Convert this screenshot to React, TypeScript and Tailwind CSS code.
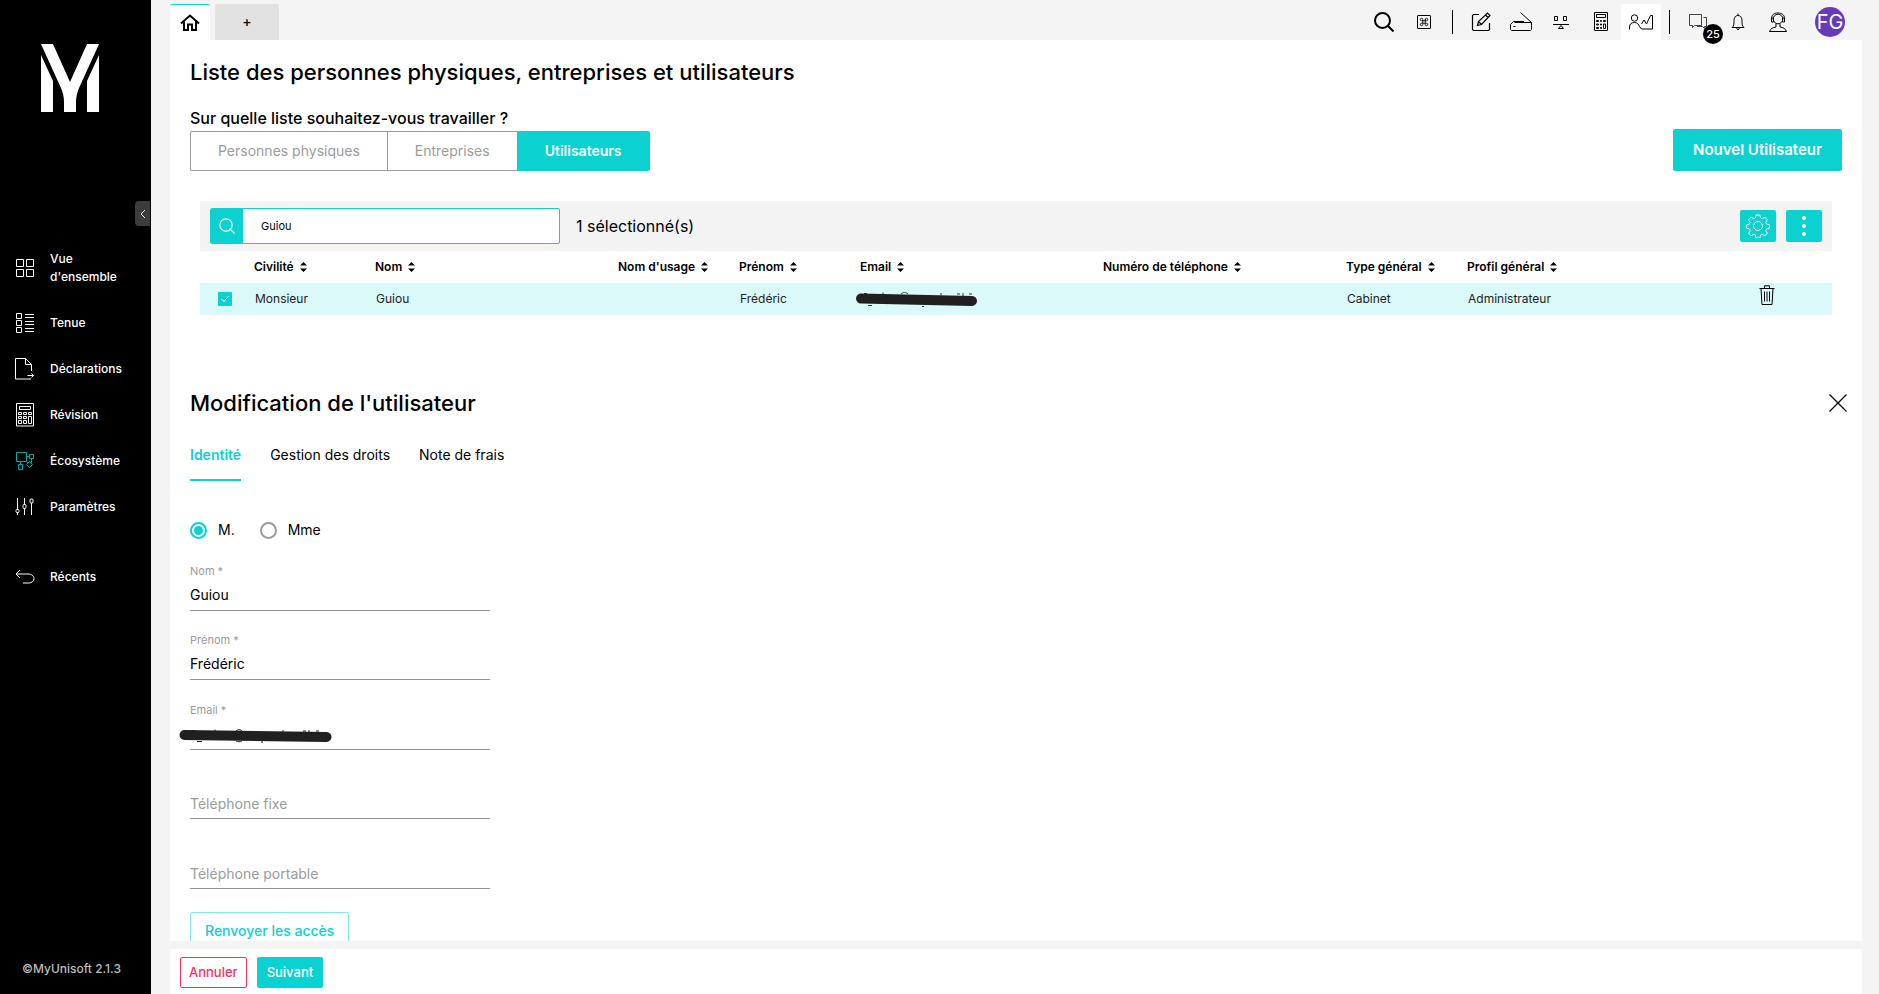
import React, { useState } from "react";
import { Command } from "lucide-react";

function Svg({
  w,
  h,
  children,
  className = "",
  sw = 1,
}: {
  w: number;
  h: number;
  children: React.ReactNode;
  className?: string;
  sw?: number;
}) {
  return (
    <svg
      width={w}
      height={h}
      viewBox={`0 0 ${w} ${h}`}
      fill="none"
      stroke="currentColor"
      strokeWidth={sw}
      className={`shrink-0 ${className}`}
      aria-hidden="true"
    >
      {children}
    </svg>
  );
}

/* ---------- sidebar icons ---------- */

const GridIcon = () => (
  <Svg w={20} h={20}>
    <path d="M1.500 1.500h7v7h-7zM11.500 1.500h7v7h-7zM1.500 11.500h7v7h-7zM11.500 11.500h7v7h-7z" />
  </Svg>
);
const ListIcon = () => (
  <Svg w={20} h={22}>
    <path d="M1.500 1.500h5v5h-5zM1.500 8.500h5v5h-5zM1.500 15.500h5v5h-5z" />
    <path d="M10 2.500h9M10 5.500h9M10 9.500h9M10 12.500h9M10 16.500h9M10 19.500h9" />
  </Svg>
);
const FileIcon = () => (
  <Svg w={20} h={24}>
    <path d="M16.500 14V7.500L10.500 1.500H.5v20.500h15.500" />
    <path d="M10.500 1.500v6h6" />
    <path d="M12.500 18.500h6M16.500 16.500l2 2-2 2" />
  </Svg>
);
const CalcIcon = () => (
  <Svg w={20} h={24}>
    <path d="M1.500 .5h17v22.500h-17z" />
    <path d="M4.500 3.500h11v3h-11z" />
    <path d="M3.500 9.500h3v2h-3zM8.500 9.500h3v2h-3zM13.500 9.500h3v2h-3zM3.500 13.500h3v2h-3zM8.500 13.500h3v2h-3zM3.500 17.500h3v3h-3zM8.500 17.500h3v3h-3zM13.500 13.500h3v7h-3z" />
  </Svg>
);
const EcoIcon = () => (
  <Svg w={20} h={20} className="text-[#0aa9a9]">
    <path d="M1.500 1.500h10v9h-10zM14.500 3.500h4v4h-4zM3.500 13.500h4v5h-4zM14.500 10.500l3 3-3 3-3-3z" />
    <path d="M11.500 5.500h3M5.500 10.500v3M11.500 10.500l1.500 1.500M16.500 7.500v4" />
  </Svg>
);
const SlidersIcon = () => (
  <Svg w={20} h={20}>
    <path d="M2.500 1v11.500M2.500 16v2M9.500 1v6.500M9.500 11.500V18M16.500 6v12" />
    <rect x="1" y="12.500" width="3" height="3" rx="1" />
    <rect x="8" y="7.500" width="3" height="4" rx="1" />
    <rect x="15" y="2" width="3" height="4" rx="1" />
  </Svg>
);
const BackIcon = () => (
  <Svg w={20} h={16}>
    <path d="M5 1L1 5l4 4M1 5h12c3.500 0 6 2 6 4.500S17 14 13.500 14H8" />
  </Svg>
);

const navItems: { label: string; icon: React.ReactNode }[] = [
  { label: "Vue d'ensemble", icon: <GridIcon /> },
  { label: "Tenue", icon: <ListIcon /> },
  { label: "Déclarations", icon: <FileIcon /> },
  { label: "Révision", icon: <CalcIcon /> },
  { label: "Écosystème", icon: <EcoIcon /> },
  { label: "Paramètres", icon: <SlidersIcon /> },
];

function NavLink({ label, icon }: { label: string; icon: React.ReactNode }) {
  return (
    <a
      href="#"
      className="flex items-center gap-[15px] py-3.5 pr-6 pl-[15px] text-xs leading-[18px] font-medium text-white"
    >
      <span className="flex h-[18px] w-5 items-center justify-center">{icon}</span>
      <span>{label}</span>
    </a>
  );
}

function Sidebar() {
  return (
    <aside className="relative flex w-[151px] shrink-0 flex-col bg-black">
      <a href="#" aria-label="MyUnisoft" className="mt-11 ml-[41px] block h-[68px]">
        <svg width="58" height="68" viewBox="0 0 58 68" fill="white" aria-hidden="true">
          <path d="M0 0H12L29 38L46 0H58L38 44C36 49 35 53 35 58V68H23V58C23 53 22 49 20 44Z" />
          <path d="M0 11L12 37V68H0ZM58 11L46 37V68H58Z" />
        </svg>
      </a>
      <button
        type="button"
        aria-label="Réduire le menu"
        className="absolute top-[201px] right-px flex h-[25px] w-[15px] items-center justify-center rounded-l bg-[#3c3c3c] text-white"
      >
        <Svg w={6} h={10}>
          <path d="M5 1L1 5l4 4" />
        </Svg>
      </button>
      <nav className="mt-[124px]">
        {navItems.map((item) => (
          <NavLink key={item.label} {...item} />
        ))}
        <div className="mt-6">
          <NavLink label="Récents" icon={<BackIcon />} />
        </div>
      </nav>
      <p className="mt-auto mb-4 ml-[22px] text-xs leading-[18px] font-medium text-[#bdbdbd]">
        ©MyUnisoft 2.1.3
      </p>
    </aside>
  );
}

/* ---------- top bar ---------- */

const tools: { label: string; icon: React.ReactNode }[] = [
  {
    label: "Édition",
    icon: (
      <Svg w={20} h={20} sw={1.2}>
        <path d="M8 2.500H2.500l-1 1v14l1 1h15l1-1V11" />
        <path d="M6.500 13.500l1-4 9-8.500 2.500 2.500-8.500 9zM7.500 9.500l3 3M14.500 3l2.500 2.500" />
      </Svg>
    ),
  },
  {
    label: "Scanner",
    icon: (
      <Svg w={22} h={20}>
        <path d="M10.500 .5L21.500 10.500M14 9.500H3.500l-3 3v5l1 1h19l1-1v-7h-17" />
        <path d="M3.500 14.500h2" />
      </Svg>
    ),
  },
  {
    label: "Équilibre",
    icon: (
      <Svg w={16} h={15}>
        <path d="M1.500 1.500h3v4h-3zM10.500 1.500h3v4h-3zM0 9.500h16M8 10.500l2.500 3h-5z" />
      </Svg>
    ),
  },
  {
    label: "Calculatrice",
    icon: (
      <Svg w={14} h={20}>
        <path d="M.5 .5h13v18h-13z" />
        <path d="M2.500 2.500h9v3h-9zM2.500 8.500h2v1h-2zM6.500 8.500h1v1h-1zM9.500 8.500h2v1h-2zM2.500 12h2v1h-2zM6.500 12h1v1h-1zM2.500 15.500h2v1h-2zM6.500 15.500h1v1h-1zM9.500 12h2v4.500h-2z" />
      </Svg>
    ),
  },
];

const toolButton = "flex h-9 w-10 items-center justify-center";

function TopBar() {
  return (
    <header className="flex h-10 shrink-0 items-end">
      <button
        type="button"
        aria-label="Accueil"
        className="flex h-9 w-10 items-center justify-center rounded-t-xs border-t border-[#0bd1d1] bg-white"
      >
        <Svg w={20} h={18} sw={2}>
          <path d="M1 9.500L10 1.500L19 9.500" />
          <path d="M4 7.500V16h4v-5.500h4V16h4V7.500" />
        </Svg>
      </button>
      <button
        type="button"
        aria-label="Nouvel onglet"
        className="ml-[5px] h-9 w-16 rounded-t-xs bg-[#e2e2e2] text-sm font-medium"
      >
        +
      </button>
      <div className="ml-auto flex items-center">
        <button type="button" aria-label="Rechercher" className={toolButton}>
          <Svg w={20} h={20} sw={2}>
            <circle cx="8.500" cy="8.500" r="7.500" />
            <path d="M14 14l5.500 5.500" />
          </Svg>
        </button>
        <button type="button" aria-label="Raccourcis" className={toolButton}>
          <span className="flex h-3.5 w-3.5 items-center justify-center rounded-[1px] border border-black">
            <Command size={10} strokeWidth={2} />
          </span>
        </button>
        <span className="mx-2 h-6 w-px bg-black" />
        {tools.map((t) => (
          <button key={t.label} type="button" aria-label={t.label} className={toolButton}>
            {t.icon}
          </button>
        ))}
        <button
          type="button"
          aria-label="Utilisateurs"
          className="flex h-9 w-10 items-center justify-center rounded-t-xs bg-white"
        >
          <Svg w={24} h={16}>
            <circle cx="5.500" cy="4" r="3.200" />
            <path d="M.5 15.500v-2.500c0-3 2-4.500 5-4.500s4 2 5 4l2 2.500h11V1.500h-2L17.500 10l-2.500-4-2.500 4" />
          </Svg>
        </button>
        <span className="mx-2 h-6 w-px bg-black" />
        <button
          type="button"
          aria-label="Messages"
          className="relative flex h-9 w-10 items-center justify-center"
        >
          <Svg w={20} h={16} className="text-[#444]">
            <path d="M1.500 .5h12v11h-7l-2 2v-2h-3zM15.500 3.500h3v9h-2v2l-2-2H9" />
          </Svg>
          <span className="absolute top-5 left-[25px] flex h-5 w-5 items-center justify-center rounded-full bg-black text-[11px] leading-none font-medium text-white">
            25
          </span>
        </button>
        <button type="button" aria-label="Notifications" className={toolButton}>
          <Svg w={14} h={18}>
            <path d="M7 .5v1.500M1 14.500c2-1.500 2-3.500 2-7C3 4 5 2.500 7 2.500s4 1.500 4 5c0 3.500 0 5.500 2 7zM5.500 15l1.500 2 1.500-2" />
          </Svg>
        </button>
        <button type="button" aria-label="Assistance" className={toolButton}>
          <Svg w={20} h={21}>
            <circle cx="10" cy="7" r="4.800" />
            <path d="M3.500 9V6.500C3.500 3 6 1 10 1s6.500 2 6.500 5.500V9M3.500 6h2v4h-2zM14.500 6h2v4h-2zM8 12v3c-3 .5-5.500 1.500-6.500 4.500h17C17.500 16.500 15 15.500 12 15v-3" />
          </Svg>
        </button>
        <button
          type="button"
          aria-label="Mon compte"
          className="mr-[17px] ml-[17px] flex h-[30px] w-[30px] items-center justify-center rounded-full bg-[#673ab7] text-xl leading-none text-white"
        >
          FG
        </button>
      </div>
    </header>
  );
}

/* ---------- list ---------- */

const columns: { label: string; width: string }[] = [
  { label: "Civilité", width: "w-[121px]" },
  { label: "Nom", width: "w-[243px]" },
  { label: "Nom d'usage", width: "w-[121px]" },
  { label: "Prénom", width: "w-[121px]" },
  { label: "Email", width: "w-[243px]" },
  { label: "Numéro de téléphone", width: "w-[243px]" },
  { label: "Type général", width: "w-[121px]" },
  { label: "Profil général", width: "w-[243px]" },
];

function SortIcon() {
  return (
    <svg width="7" height="10" viewBox="0 0 7 10" aria-hidden="true">
      <path d="M0 3.500L3.500 0L7 3.500ZM0 6.500L3.500 10L7 6.500Z" fill="currentColor" />
    </svg>
  );
}

function Choices() {
  const options = ["Personnes physiques", "Entreprises", "Utilisateurs"];
  const [active, setActive] = useState("Utilisateurs");
  return (
    <div className="flex h-10">
      {options.map((o) => (
        <button
          key={o}
          type="button"
          onClick={() => setActive(o)}
          className={
            o === active
              ? "rounded-r-xs bg-[#0bd1d1] px-7 text-sm font-semibold text-white"
              : "border border-r-0 border-[#9b9b9b] px-[27px] text-sm text-[#9b9b9b] first:rounded-l-xs"
          }
        >
          {o}
        </button>
      ))}
    </div>
  );
}

const cell = "pl-px text-[#222]";

function UserTable() {
  return (
    <section className="mx-2.5 mt-[30px]">
      <div className="flex h-[50px] items-center bg-[#f3f3f3] px-2.5">
        <label className="flex h-9 w-[350px] overflow-hidden rounded-xs border border-[#0bd1d1] bg-white">
          <span className="flex w-8 shrink-0 items-center justify-center bg-[#0bd1d1] text-white">
            <Svg w={16} h={16} sw={1.2}>
              <circle cx="7" cy="7" r="6.200" />
              <path d="M11.500 11.500l4 4" />
            </Svg>
          </span>
          <input
            type="text"
            aria-label="Rechercher un utilisateur"
            defaultValue="Guiou"
            className="min-w-0 flex-1 pl-[18px] text-[11px] outline-none"
          />
        </label>
        <p className="ml-4 text-base">1 sélectionné(s)</p>
        <button
          type="button"
          aria-label="Réglages"
          className="ml-auto flex h-8 w-9 items-center justify-center rounded-xs bg-[#0bd1d1] text-white"
        >
          <Svg w={24} h={24}>
            <circle cx="12" cy="12" r="4.500" />
            <path
              d="M10.200 1h3.600l.8 3 1.700.7 2.700-1.500 2.300 2.500-1.400 2.600.7 1.800 2.900.8v3.200l-2.900.8-.7 1.800 1.400 2.600-2.300 2.500-2.700-1.500-1.700.7-.8 3h-3.600l-.8-3-1.700-.7L5 21.800l-2.300-2.500 1.400-2.600-.7-1.800-2.900-.8v-3.200l2.900-.8.7-1.800-1.400-2.600L5 3.200l2.700 1.500 1.700-.7z"
              strokeLinejoin="round"
            />
          </Svg>
        </button>
        <button
          type="button"
          aria-label="Plus d'actions"
          className="ml-2.5 flex h-8 w-9 items-center justify-center rounded-xs bg-[#0bd1d1]"
        >
          <svg width="4" height="20" viewBox="0 0 4 20" fill="white" aria-hidden="true">
            <circle cx="2" cy="2" r="2" />
            <circle cx="2" cy="10" r="2" />
            <circle cx="2" cy="18" r="2" />
          </svg>
        </button>
      </div>
      <table className="w-full table-fixed text-left text-xs">
        <thead>
          <tr className="h-8">
            <th className="w-[54px]" aria-label="Sélection" />
            {columns.map((c) => (
              <th key={c.label} className={`${c.width} font-semibold whitespace-nowrap`}>
                <button type="button" className="flex items-center gap-1.5">
                  {c.label}
                  <SortIcon />
                </button>
              </th>
            ))}
            <th aria-label="Actions" />
          </tr>
        </thead>
        <tbody>
          <tr className="h-8 bg-[#dbf9f9]">
            <td className="pl-[18px]">
              <label className="relative block h-3.5 w-3.5 text-white">
                <input
                  type="checkbox"
                  defaultChecked
                  aria-label="Sélectionner Frédéric Guiou"
                  className="block h-3.5 w-3.5 appearance-none rounded-[1px] bg-[#0bd1d1]"
                />
                <Svg w={14} h={14} className="pointer-events-none absolute top-0 left-0">
                  <path d="M3.500 7l2.500 2.500L10.500 4" />
                </Svg>
              </label>
            </td>
            <td className={cell}>Monsieur</td>
            <td className={cell}>Guiou</td>
            <td />
            <td className={cell}>Frédéric</td>
            <td>
              <svg
                width="122"
                height="16"
                viewBox="0 0 122 16"
                className="-ml-1"
                fill="none"
                aria-label="Email masqué"
              >
                <path
                  d="M8 2.500h3M12 14.500h4M27 1.500v2M45 3c2-2 5-2 7 0M66 15.500h2M85 2v3M101 3h3M107 2v3M113 3h3"
                  stroke="#333"
                />
                <path d="M5 7.500L116 10" stroke="#202020" strokeWidth="10" strokeLinecap="round" />
              </svg>
            </td>
            <td />
            <td className={cell}>Cabinet</td>
            <td className={cell}>Administrateur</td>
            <td>
              <button type="button" aria-label="Supprimer" className="mb-2 ml-[49px] block">
                <Svg w={16} h={20}>
                  <path d="M.5 3.500h15M5.500 3V.8h5V3M2 3.500l1 16h10l1-16M5.500 6.500v10M8 6.500v10M10.500 6.500v10" />
                </Svg>
              </button>
            </td>
          </tr>
        </tbody>
      </table>
    </section>
  );
}

/* ---------- edit form ---------- */

function Radio({ label, checked }: { label: string; checked?: boolean }) {
  return (
    <label className="flex items-center gap-[11px] text-sm">
      <input
        type="radio"
        name="civilite"
        defaultChecked={checked}
        className="h-[17px] w-[17px] appearance-none rounded-full border-2 border-[#9b9b9b] bg-white bg-clip-content p-[2px] checked:border-[#0bd1d1] checked:bg-[#0bd1d1]"
      />
      {label}
    </label>
  );
}

function Field({
  id,
  label,
  value,
  masked,
}: {
  id: string;
  label: string;
  value?: string;
  masked?: boolean;
}) {
  const filled = value !== undefined || masked;
  return (
    <div className="relative flex flex-col justify-end">
      <label
        htmlFor={id}
        className={
          filled
            ? "text-[11px] leading-4 text-[#9b9b9b]"
            : "absolute bottom-0 left-0 text-sm leading-[30px] text-[#9b9b9b]"
        }
      >
        {label}
      </label>
      <input
        id={id}
        type="text"
        defaultValue={value}
        className="h-8 w-full border-b border-[#949494] text-sm outline-none"
      />
      {masked && (
        <svg
          width="154"
          height="16"
          viewBox="0 0 154 16"
          fill="none"
          className="pointer-events-none absolute bottom-1.5 -left-[11px]"
          aria-hidden="true"
        >
          <path
            d="M12 2.500h4M18 13.500h5M36 1.500v2M56 4c2-3 6-3 8 0M57 13c2 1 4 1 6 0M82 14h2M104 2v3M124 3h3M130 2v3M137 3h3"
            stroke="#222"
          />
          <path d="M5.500 7L147.500 9" stroke="#202020" strokeWidth="10" strokeLinecap="round" />
        </svg>
      )}
    </div>
  );
}

function EditForm() {
  const tabs = ["Identité", "Gestion des droits", "Note de frais"];
  return (
    <section className="mt-[74px]">
      <div className="-mr-[5px] flex items-center justify-between">
        <h2 className="text-[22px] leading-7 font-medium">Modification de l'utilisateur</h2>
        <button type="button" aria-label="Fermer">
          <Svg w={18} h={18} sw={1.2}>
            <path d="M.5 .5l17 17M17.500 .5l-17 17" />
          </Svg>
        </button>
      </div>
      <nav className="mt-6 flex h-10 gap-[29px] text-sm leading-7">
        {tabs.map((t, i) => (
          <a
            key={t}
            href="#"
            className={i === 0 ? "border-b-2 border-[#0bd1d1] font-semibold text-[#0bd1d1]" : ""}
          >
            {t}
          </a>
        ))}
      </nav>
      <div className="mt-[39px] flex h-5 gap-[25px]">
        <Radio label="M." checked />
        <Radio label="Mme" />
      </div>
      <div className="mt-px grid h-[348px] w-[300px] grid-rows-5">
        <Field id="nom" label="Nom *" value="Guiou" />
        <Field id="prenom" label="Prénom *" value="Frédéric" />
        <Field id="email" label="Email *" masked />
        <Field id="fixe" label="Téléphone fixe" />
        <Field id="portable" label="Téléphone portable" />
      </div>
      <button
        type="button"
        className="mt-[23px] h-[38px] rounded-xs border border-[#85e8e8] px-3.5 text-sm font-medium text-[#0bd1d1]"
      >
        Renvoyer les accès
      </button>
    </section>
  );
}

export default function App() {
  return (
    <div className="flex h-screen bg-[#f4f4f4] font-['Inter','Liberation_Sans',sans-serif] text-black">
      <Sidebar />
      <div className="flex min-w-0 flex-1 flex-col pr-[17px] pl-[19px]">
        <TopBar />
        <main className="min-h-0 flex-1 overflow-hidden bg-white px-5 pt-[18px]">
          <h1 className="text-[22px] leading-7 font-medium">
            Liste des personnes physiques, entreprises et utilisateurs
          </h1>
          <div className="mt-[19px] flex items-end justify-between">
            <div>
              <p className="text-base leading-[26px] font-medium">
                Sur quelle liste souhaitez-vous travailler ?
              </p>
              <Choices />
            </div>
            <button
              type="button"
              className="h-[42px] rounded-xs bg-[#0bd1d1] px-5 text-[15px] font-semibold text-white"
            >
              Nouvel Utilisateur
            </button>
          </div>
          <UserTable />
          <EditForm />
        </main>
        <footer className="mt-2 flex h-[45px] shrink-0 gap-2.5 bg-white px-2.5 pt-2">
          <button
            type="button"
            className="h-[31px] rounded-xs border border-[#f9335e] px-2 text-[13px] font-medium text-[#f9335e]"
          >
            Annuler
          </button>
          <button
            type="button"
            className="h-[31px] rounded-xs bg-[#0bd1d1] px-2.5 text-[13px] font-medium text-white"
          >
            Suivant
          </button>
        </footer>
      </div>
    </div>
  );
}
